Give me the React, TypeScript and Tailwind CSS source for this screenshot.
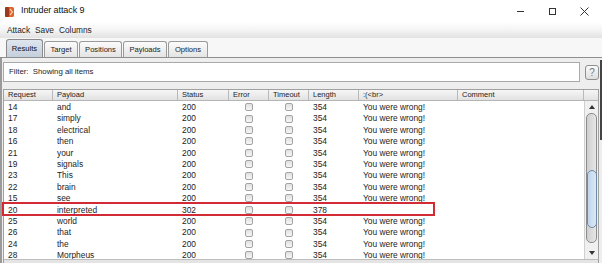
import React from "react";

interface Row {
  req: string;
  payload: string;
  status: string;
  length: string;
  br: string;
}

const rows: Row[] = [
  { req: "14", payload: "and", status: "200", length: "354", br: "You were wrong!" },
  { req: "17", payload: "simply", status: "200", length: "354", br: "You were wrong!" },
  { req: "18", payload: "electrical", status: "200", length: "354", br: "You were wrong!" },
  { req: "16", payload: "then", status: "200", length: "354", br: "You were wrong!" },
  { req: "21", payload: "your", status: "200", length: "354", br: "You were wrong!" },
  { req: "19", payload: "signals", status: "200", length: "354", br: "You were wrong!" },
  { req: "23", payload: "This", status: "200", length: "354", br: "You were wrong!" },
  { req: "22", payload: "brain", status: "200", length: "354", br: "You were wrong!" },
  { req: "15", payload: "see", status: "200", length: "354", br: "You were wrong!" },
  { req: "20", payload: "interpreted", status: "302", length: "378", br: "" },
  { req: "25", payload: "world", status: "200", length: "354", br: "You were wrong!" },
  { req: "26", payload: "that", status: "200", length: "354", br: "You were wrong!" },
  { req: "24", payload: "the", status: "200", length: "354", br: "You were wrong!" },
  { req: "28", payload: "Morpheus", status: "200", length: "354", br: "You were wrong!" },
];

const cols = "grid grid-cols-[49px_125px_51px_40px_40px_50px_99px_126px]";

function Check() {
  return (
    <div className="flex items-center justify-center">
      <div className="w-[8px] h-[8px] rounded-[2px] border border-[#a3a3a3] bg-gradient-to-b from-[#e0e0e0] to-[#f7f7f7]" />
    </div>
  );
}

function Tab({ label, w, active }: { label: string; w: string; active?: boolean }) {
  return (
    <div
      className={
        active
          ? `${w} h-[18px] flex items-center justify-center rounded-t-[3px] border border-b-0 border-[#8a8a8a] bg-gradient-to-b from-[#dfe6ee] to-[#c3cfdc] text-[#111]`
          : `${w} h-[16px] flex items-center justify-center rounded-t-[3px] border border-b-0 border-[#9a9a9a] bg-gradient-to-b from-[#fbfbfb] to-[#e4e4e4] text-[#222]`
      }
    >
      {label}
    </div>
  );
}

export default function App() {
  return (
    <div className="relative w-[602px] h-[263px] overflow-hidden bg-white font-['Liberation_Sans',Arial,sans-serif] text-[#1c1c1c]">
      {/* title bar */}
      <div className="h-[22px] flex items-center">
        <svg className="ml-[5px] mt-[1px]" width="9" height="10" viewBox="0 0 9 10">
          <rect x="0" y="0" width="9" height="10" rx="1.5" fill="#e2602a" />
          <rect x="0" y="0" width="4" height="10" rx="1" fill="#9b3a1c" />
          <path d="M5 2 L7.5 5 L5 8" stroke="#f7c9a8" strokeWidth="1.2" fill="none" />
        </svg>
        <span className="ml-[7px] text-[9px] tracking-[-0.1px] text-[#111]">Intruder attack 9</span>
        <div className="ml-auto flex mr-[2px]">
          <div className="w-[32px] h-[22px] flex items-center justify-center">
            <div className="w-[7px] h-px bg-[#333]" />
          </div>
          <div className="w-[32px] h-[22px] flex items-center justify-center">
            <div className="w-[7px] h-[7px] border border-[#333]" />
          </div>
          <div className="w-[32px] h-[22px] flex items-center justify-center">
            <svg width="9" height="9" viewBox="0 0 9 9">
              <path d="M0.5 0.5 L8.5 8.5 M8.5 0.5 L0.5 8.5" stroke="#333" strokeWidth="1" />
            </svg>
          </div>
        </div>
      </div>

      {/* menu bar */}
      <div className="h-[16px] flex items-center gap-[5px] pl-[7px] text-[8.3px] bg-gradient-to-b from-[#ffffff] via-[#f4f4f4] to-[#e2e2e2]">
        <span>Attack</span>
        <span>Save</span>
        <span>Columns</span>
      </div>

      {/* tabs */}
      <div className="h-[20px] flex items-end gap-px pl-[6px] text-[7.6px] bg-[#f7f7f7] border-b border-[#8e8e8e]">
        <Tab label="Results" w="w-[37px]" active />
        <Tab label="Target" w="w-[34px]" />
        <Tab label="Positions" w="w-[43px]" />
        <Tab label="Payloads" w="w-[44px]" />
        <Tab label="Options" w="w-[40px]" />
      </div>

      {/* panel */}
      <div className="h-[205px] bg-[#eeeeee] border-l-2 border-[#9a9a9a] flex flex-col">
        <div className="flex items-center mt-[4px]">
          <div className="ml-px w-[577px] h-[20px] bg-white border border-[#a9a9a9] flex items-center pl-[5px] text-[7.8px]">
            Filter:&nbsp; Showing all items
          </div>
          <div className="ml-[5px] w-[14px] h-[15px] rounded-[3px] border border-[#8f8f8f] bg-gradient-to-b from-[#fafafa] to-[#dedede] flex items-center justify-center text-[10px] text-[#777]">
            ?
          </div>
        </div>

        <div className="mt-[7px] ml-px w-[596px] border border-[#a0a0a0] bg-white flex flex-col">
          {/* header */}
          <div className="flex h-[11px]">
            <div className={`${cols} text-[7.5px] bg-gradient-to-b from-[#f6f6f6] to-[#e2e2e2] border-b border-[#b5b5b5]`}>
              {["Request", "Payload", "Status", "Error", "Timeout", "Length", ":(<br>", "Comment"].map((h) => (
                <div key={h} className="pl-[4px] border-r border-[#b9b9b9] leading-[10px]">
                  {h}
                </div>
              ))}
            </div>
            <div className="w-[14px] bg-gradient-to-b from-[#f6f6f6] to-[#e2e2e2] border-b border-[#b5b5b5]" />
          </div>

          {/* body */}
          <div className="flex h-[158px]">
            <div className="flex flex-col overflow-hidden text-[8.4px]">
              {rows.map((r) => (
                <div key={r.req} className={`${cols} h-[11.4px] shrink-0 items-center`}>
                  <div className="pl-[4px]">{r.req}</div>
                  <div className="pl-[4px]">{r.payload}</div>
                  <div className="pl-[4px]">{r.status}</div>
                  <Check />
                  <Check />
                  <div className="pl-[4px]">{r.length}</div>
                  <div className="pl-[4px]">{r.br}</div>
                  <div />
                </div>
              ))}
            </div>
            {/* vertical scrollbar */}
            <div className="w-[14px] flex flex-col items-center bg-[#f0f0f0] border-l border-[#d0d0d0]">
              <div className="h-[12px] flex items-center justify-center">
                <svg width="6" height="4" viewBox="0 0 6 4">
                  <path d="M0 4 L3 0 L6 4 Z" fill="#333" />
                </svg>
              </div>
              <div className="w-[11px] h-[130px] rounded-[5px] border border-[#8c8c8c] bg-gradient-to-r from-[#cfcfcf] to-[#e6e6e6] flex flex-col items-center pt-[56px]">
                <div className="w-[10px] h-[58px] rounded-[5px] border border-[#6f8aa6] bg-gradient-to-r from-[#c0d6ec] to-[#dbe8f5]" />
              </div>
              <div className="mt-auto h-[12px] flex items-center justify-center">
                <svg width="6" height="4" viewBox="0 0 6 4">
                  <path d="M0 0 L3 4 L6 0 Z" fill="#333" />
                </svg>
              </div>
            </div>
          </div>
          <div className="h-[4px] bg-[#e4e4e4] border-t border-[#bdbdbd]" />
        </div>
      </div>

      {/* highlight around the 302 row */}
      <div className="absolute left-[2px] top-[202px] w-[433px] h-[14px] border-2 border-[#d22b35]" />
      <div className="absolute right-0 top-[60px] w-[2px] h-[80px] bg-[#444]" />
    </div>
  );
}
